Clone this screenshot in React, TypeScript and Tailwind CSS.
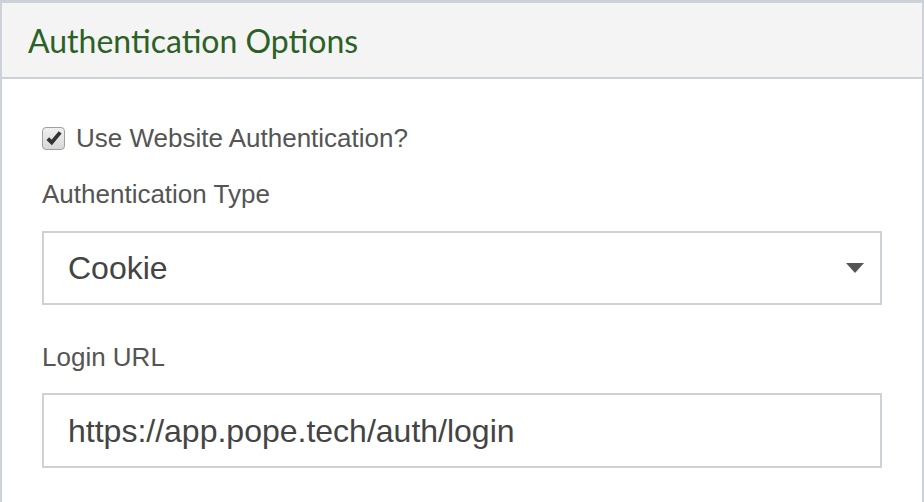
export default function App() {
  return (
    <div className="h-[502px] w-[924px] overflow-hidden bg-white">
      <div className="h-[540px] border-x-2 border-t-[3px] border-[#cdd2d8]">
        <div className="flex h-[76px] items-center border-b-2 border-[#cdd2d8] bg-[#f4f4f4] px-[26px]">
          <h2 className="pt-[2px] font-['Lato',sans-serif] text-[32px] text-[#2c6125]">Authentication Options</h2>
        </div>
        <div className="px-[40px] pt-[44px] font-['Liberation_Sans',Arial,sans-serif] text-[#555]">
          <label className="flex items-center gap-[11px]">
            <span className="flex h-[23px] w-[23px] items-center justify-center rounded-[4px] border border-[#a0a0a0] bg-gradient-to-b from-[#f0f0f0] to-[#d8d8d8]">
              <svg viewBox="0 0 16 16" className="h-[18px] w-[18px]">
                <path d="M2.5 8.5 L6 12 L13.5 3" fill="none" stroke="#333" strokeWidth="3.4" />
              </svg>
            </span>
            <span className="text-[26px] leading-[30px]">Use Website Authentication?</span>
          </label>
          <div className="mt-[26px] text-[26px] leading-[30px]">Authentication Type</div>
          <div className="mt-[22px] flex h-[74px] items-center justify-between border-2 border-[#cdd2d8] pl-[24px] pr-[16px]">
            <span className="text-[32px] text-[#444]">Cookie</span>
            <svg viewBox="0 0 18 10" className="h-[10px] w-[18px]">
              <path d="M0 0 H18 L9 10 Z" fill="#555" />
            </svg>
          </div>
          <div className="mt-[37px] text-[26px] leading-[30px]">Login URL</div>
          <div className="mt-[21px] flex h-[75px] items-center border-2 border-[#cdd2d8] pl-[24px]">
            <span className="text-[32px] text-[#444]">https://app.pope.tech/auth/login</span>
          </div>
        </div>
      </div>
    </div>
  );
}
